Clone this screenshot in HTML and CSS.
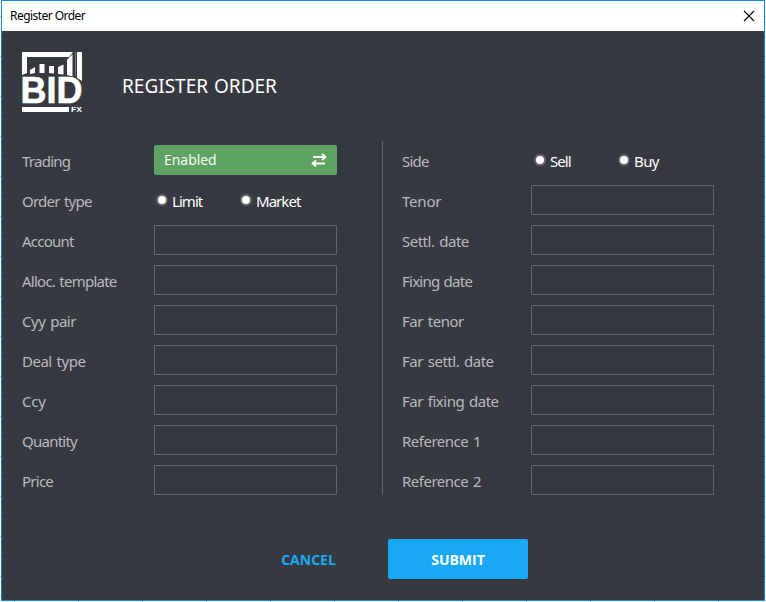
FILE: index.html
```
<!DOCTYPE html>
<html lang="en">
<head>
<meta charset="utf-8">
<title>Register Order</title>
<link rel="stylesheet" href="styles.css">
</head>
<body>
<main class="window">
  <header class="titlebar">
    <span class="caption">Register Order</span>
    <svg class="close" width="12" height="12" viewBox="0 0 12 12"><path d="M1 1 11 11M11 1 1 11"/></svg>
  </header>
  <section class="brand">
    <svg class="logo" width="60" height="60" viewBox="0 0 60 60">
      <path d="M0 0H51L47 5H5V21L0 23ZM8 18 13 15V21L8 22ZM17.500 12H22.500V21H17.500ZM27 14H32V21.500L27 21ZM36 15 41.500 12.500V22.500L36 22ZM45 8 50.500 2V24.500L45 23ZM55 0H60V29L55 26Z"/>
      <path class="edge" d="M53.500 0V24"/>
      <text class="logo-name" x="-1.500" y="51" textLength="62" lengthAdjust="spacingAndGlyphs">BID</text>
      <path d="M0 55H47V60H0Z"/>
      <text class="logo-fx" x="49" y="60" textLength="11" lengthAdjust="spacingAndGlyphs">FX</text>
    </svg>
    <h1>REGISTER ORDER</h1>
  </section>
  <form class="fields">
    <div class="column left">
      <div class="row"><label>Trading</label><button type="button" class="toggle"><span>Enabled</span><svg width="16" height="14" viewBox="0 0 16 14"><path d="M2 4H14M11 0.800 14.500 4 11 7M14 10.500H2M5 7.300 1.500 10.500 5 13.500"/></svg></button></div>
      <div class="row"><label>Order type</label><div class="options"><span class="option"><i></i><b class="snug">Limit</b></span><span class="option"><i></i><b class="snug">Market</b></span></div></div>
      <div class="row"><label>Account</label><div class="input"></div></div>
      <div class="row"><label>Alloc. template</label><div class="input"></div></div>
      <div class="row"><label class="loose">Cyy pair</label><div class="input"></div></div>
      <div class="row"><label class="loose">Deal type</label><div class="input"></div></div>
      <div class="row"><label class="wide">Ccy</label><div class="input"></div></div>
      <div class="row"><label>Quantity</label><div class="input"></div></div>
      <div class="row"><label>Price</label><div class="input"></div></div>
    </div>
    <div class="column right">
      <div class="row"><label>Side</label><div class="options"><span class="option"><i></i><b class="snug">Sell</b></span><span class="option"><i></i><b>Buy</b></span></div></div>
      <div class="row"><label class="wide">Tenor</label><div class="input"></div></div>
      <div class="row"><label class="loose">Settl. date</label><div class="input"></div></div>
      <div class="row"><label>Fixing date</label><div class="input"></div></div>
      <div class="row"><label class="loose">Far tenor</label><div class="input"></div></div>
      <div class="row"><label class="loose">Far settl. date</label><div class="input"></div></div>
      <div class="row"><label class="loose">Far fixing date</label><div class="input"></div></div>
      <div class="row"><label class="loose">Reference 1</label><div class="input"></div></div>
      <div class="row"><label class="loose">Reference 2</label><div class="input"></div></div>
    </div>
  </form>
  <footer class="actions">
    <button class="cancel">CANCEL</button>
    <button class="submit">SUBMIT</button>
  </footer>
</main>
</body>
</html>
```
FILE: styles.css
```
* { box-sizing: border-box; }
body {
  margin: 0;
  padding-left: 1px;
  height: 602px;
  overflow: hidden;
  background:
    repeating-linear-gradient(to right, transparent 0 14px, #c3c6c9 14px 15px, transparent 15px 64px) 0 601px / 100% 1px no-repeat,
    repeating-linear-gradient(to bottom, transparent 0 16px, #c3c6c9 16px 17px, transparent 17px 20px),
    #fff;
  font-family: "Noto Sans", sans-serif;
}
.window {
  width: 764px;
  height: 601px;
  border: 1px solid #1883d7;
  background: #373941;
}
.titlebar {
  height: 30px;
  padding: 0 9px 0 8px;
  display: flex;
  align-items: center;
  justify-content: space-between;
  background: #fff;
}
.caption { font-size: 12px; line-height: 16px; letter-spacing: -0.55px; color: #000; }
.close path { fill: none; stroke: #000; stroke-width: 1.1; }
.brand { height: 110px; padding: 21px 0 0 20px; display: flex; gap: 40px; }
.logo { fill: #fff; overflow: visible; }
.edge { stroke: #777980; stroke-width: 1; }
.logo-name { font: bold 36px "Liberation Sans", sans-serif; stroke: #fff; stroke-width: 0.6; }
.logo-fx { font: bold 6.5px "Liberation Sans", sans-serif; }
h1 { margin: 20px 0 0; height: 28px; font-weight: 400; font-size: 19px; line-height: 28px; color: #fff; letter-spacing: 0; word-spacing: 1px; }
.fields { display: flex; height: 354px; padding-left: 20px; }
.left { width: 361px; border-right: 1px solid #66676a; }
.right { padding-left: 19px; }
.column { padding-top: 4px; }
.row { display: flex; height: 30px; margin-bottom: 10px; }
label { width: 132px; padding-top: 1px; font-size: 15px; line-height: 30px; color: #b9babd; white-space: nowrap; letter-spacing: -0.75px; word-spacing: 1px; }
.loose { letter-spacing: -0.5px; word-spacing: 1.5px; }
.wide { letter-spacing: -0.2px; }
.right label { width: 129px; }
.input { width: 183px; border: 1px solid #66676a; }
.toggle {
  width: 183px;
  border: 0;
  border-radius: 2px;
  padding: 0 10px;
  display: flex;
  align-items: center;
  justify-content: space-between;
  background: #5ea362;
  color: #fff;
  font: 14px/30px "Open Sans", sans-serif;
}
.toggle path { fill: none; stroke: #fff; stroke-width: 1.8; }
.options { display: flex; padding-left: 2px; }
.option { display: flex; width: 84px; }
.right .options { padding-left: 3px; }
.option i { width: 12px; height: 12px; margin: 9px 4px 0 0; border: 2px solid #65666a; border-radius: 50%; background: #fff; }
.option b { font-weight: 400; font-size: 15px; line-height: 30px; padding-top: 1px; letter-spacing: -0.6px; color: #fff; }
.option .snug { letter-spacing: -0.95px; }
.actions { display: flex; padding: 44px 0 0 262px; gap: 35px; }
.actions button { height: 40px; border: 0; border-radius: 2px; padding: 2px 0 0; font: bold 14px/38px "Open Sans", sans-serif; }
.cancel { width: 89px; color: #19a9f4; background: transparent; }
.submit { width: 140px; color: #fff; background: #19a9f4; }
```
